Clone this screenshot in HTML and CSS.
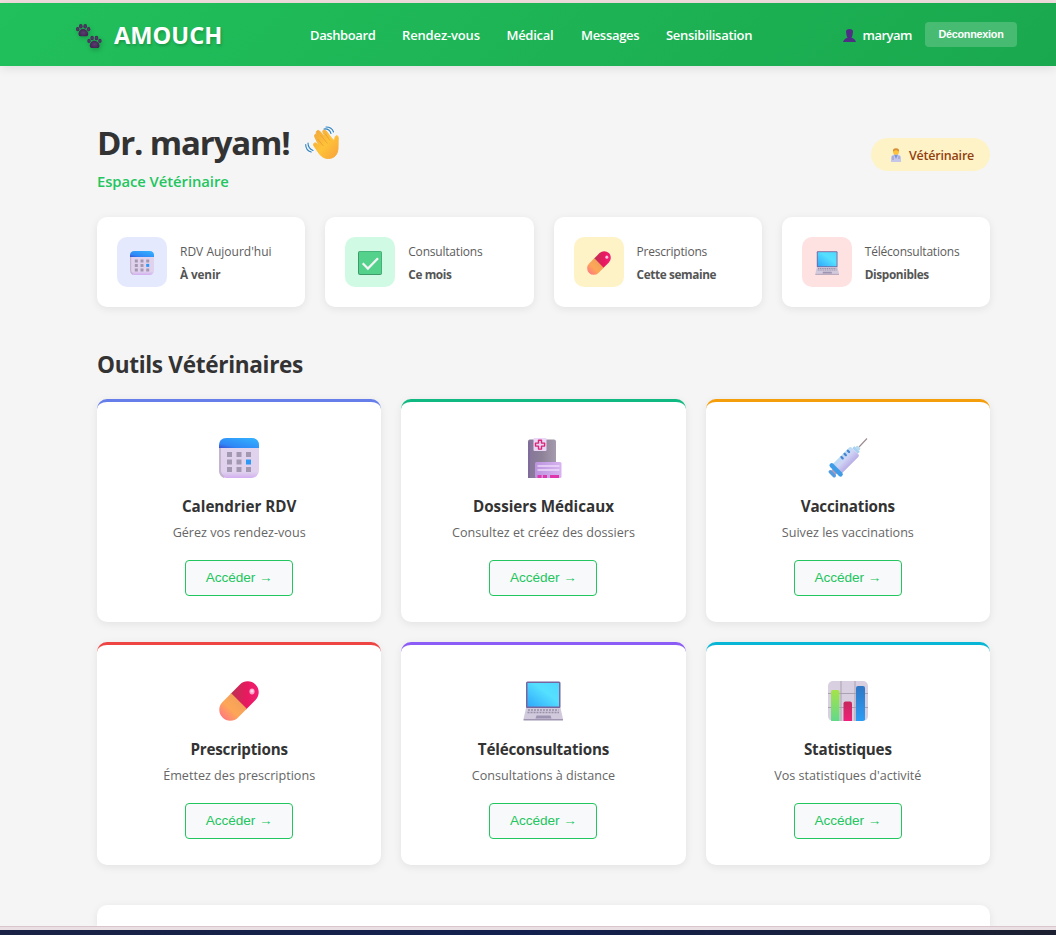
FILE: index.html
```html
<!DOCTYPE html>
<html lang="fr">
<head>
<meta charset="utf-8">
<title>Amouch</title>
<link rel="stylesheet" href="styles.css">
</head>
<body>
<svg class="defs" width="0" height="0" aria-hidden="true">
  <defs>
    <linearGradient id="calTop" x1="0" x2="1" y1="1" y2="0"><stop offset="0" stop-color="#3b4fd0"/><stop offset=".25" stop-color="#2f86f6"/><stop offset="1" stop-color="#33b5ff"/></linearGradient>
    <linearGradient id="calBody" x1="0" x2="0" y1="0" y2="1"><stop offset="0" stop-color="#e0d3ec"/><stop offset=".85" stop-color="#e0d2ee"/><stop offset="1" stop-color="#d3aef0"/></linearGradient>
    <linearGradient id="pillA" x1="0" x2="1" y1="0" y2="1"><stop offset="0" stop-color="#b83450"/><stop offset=".5" stop-color="#e8195f"/><stop offset="1" stop-color="#f5207c"/></linearGradient>
    <linearGradient id="pillB" x1="1" x2="0" y1="0" y2="0"><stop offset="0" stop-color="#f3a25a"/><stop offset=".5" stop-color="#fda657"/><stop offset="1" stop-color="#ff7b7d"/></linearGradient>
    <linearGradient id="screen" x1="0" x2="1" y1="1" y2="0"><stop offset="0" stop-color="#2fa8fb"/><stop offset=".6" stop-color="#55e0ff"/><stop offset="1" stop-color="#4fd8ff"/></linearGradient>
    <linearGradient id="book" x1="0" x2="1" y1="0" y2="0"><stop offset="0" stop-color="#85749a"/><stop offset=".5" stop-color="#8e8298"/><stop offset="1" stop-color="#a59bad"/></linearGradient>
    <linearGradient id="label" x1="0" x2="1" y1="0" y2="0"><stop offset="0" stop-color="#bb93df"/><stop offset="1" stop-color="#d8b4f0"/></linearGradient>
    <linearGradient id="barrel" x1="0" x2="0" y1="0" y2="1"><stop offset="0" stop-color="#b4dcf5"/><stop offset=".4" stop-color="#d0d4f5"/><stop offset="1" stop-color="#b8aee6"/></linearGradient>
    <linearGradient id="barG" x1="0" x2="0" y1="0" y2="1"><stop offset="0" stop-color="#a5e34a"/><stop offset="1" stop-color="#62d98a"/></linearGradient>
    <linearGradient id="barR" x1="0" x2="0" y1="0" y2="1"><stop offset="0" stop-color="#c5285c"/><stop offset="1" stop-color="#ef2079"/></linearGradient>
    <linearGradient id="barB" x1="0" x2="0" y1="0" y2="1"><stop offset="0" stop-color="#3077c4"/><stop offset="1" stop-color="#2c9cf5"/></linearGradient>
    <linearGradient id="hand" x1="0" x2="1" y1="0" y2="1"><stop offset="0" stop-color="#f0a53a"/><stop offset=".5" stop-color="#ffc338"/><stop offset="1" stop-color="#f7a13c"/></linearGradient>
    <radialGradient id="paw"><stop offset="0" stop-color="#5b3c70"/><stop offset="1" stop-color="#412653"/></radialGradient>
    <symbol id="i-calendar" viewBox="0 0 40 40">
      <rect width="40" height="40" rx="7.500" fill="url(#calBody)"/>
      <path d="M1 10v22q0 5 4 7" fill="none" stroke="#c4b5cf" stroke-width="2"/>
      <path d="M0 10V7.500Q0 0 7.500 0h25Q40 0 40 7.500V10z" fill="url(#calTop)"/>
      <path d="M8 14h5v5H8zm9.500 0h5v5h-5zm9.500 0h5v5h-5zM8 21.500h5v5H8zm9.500 0h5v5h-5zM8 29h5v5H8zm9.500 0h5v5h-5zm9.500 0h5v5h-5z" fill="#a398b1"/>
      <path d="M27 21.500h5v5h-5z" fill="#2d98f5"/>
    </symbol>
    <symbol id="i-pill" viewBox="0 0 40 40">
      <g transform="rotate(-45 20 20)">
        <path d="M19 9h13.300a11 11 0 0 1 0 22H19z" fill="url(#pillA)"/>
        <path d="M20 9H7.700a11 11 0 0 0 0 22H20z" fill="url(#pillB)"/>
      </g>
      <ellipse cx="33" cy="10.500" rx="2.600" ry="3" fill="#ff9ec6"/><circle cx="33" cy="10" r="1.600" fill="#ffd6ea"/>
    </symbol>
    <symbol id="i-laptop" viewBox="0 0 40 40">
      <rect x="3" y=".5" width="34.500" height="27" rx="1.500" fill="#77659f"/>
      <rect x="4.500" y="2" width="31.500" height="23.500" fill="url(#screen)"/>
      <path d="M3 27h34.500L40 38H.5z" fill="#d1c9dc"/>
      <path d="M5 29h30.500M4.500 31.500h31.500" stroke="#9990a6" stroke-width="1.700" stroke-dasharray="2 1"/>
      <path d="M13.500 34.500h14l1 3h-16z" fill="#9e94b1"/>
      <path d="M.5 38H40v1.500H.5z" fill="#a096b2"/>
    </symbol>
    <symbol id="i-check" viewBox="0 0 24 24">
      <rect width="24" height="24" rx="2" fill="#3d9a69"/>
      <rect x="1" y=".6" width="22.400" height="22.400" rx="1.200" fill="#54d28c"/>
      <path d="M4.700 12.300l5.200 5.200L20 7.300" fill="none" stroke="#f3f4f6" stroke-width="2.300"/>
    </symbol>
    <symbol id="i-record" viewBox="0 0 40 40">
      <path d="M5 3.500Q5 1.500 7 1.500h24q2 0 2 2V40H5z" fill="url(#book)"/>
      <path d="M6 4v36" stroke="#7e689d" stroke-width="1.500"/>
      <rect x="10.500" y="0" width="13" height="13" rx="1" fill="#ead6f7"/>
      <path d="M15.500 2.200h3v2.900h3.100v3h-3.100v3h-3v-3h-3v-3h3z" fill="#ead6f7" stroke="#dc2573" stroke-width="1.400" stroke-linejoin="round"/>
      <rect x="12" y="24" width="26.500" height="16" rx="1.500" fill="url(#label)"/>
      <path d="M14.500 28h22M14.500 32h22" stroke="#edd9fa" stroke-width="1.700"/>
      <path d="M14.500 38.500h4m1.500 0h4m3 0h9" stroke="#df37ae" stroke-width="3"/>
    </symbol>
    <symbol id="i-syringe" viewBox="0 0 40 40">
      <path d="M31 9l8-8.500" stroke="#9b8990" stroke-width="1.100"/>
      <g transform="rotate(-45 20 20)">
        <rect x="-2" y="17" width="6" height="6" fill="#bd9db7"/>
        <rect x="-4" y="15.500" width="3.500" height="9" rx="1.700" fill="#569ce0"/>
        <rect x="3" y="13.500" width="27" height="13" rx="2" fill="url(#barrel)"/>
        <rect x="30" y="16" width="3" height="8" rx="1" fill="#a8d2f0"/>
        <rect x="32.500" y="17.500" width="3" height="5" rx="1" fill="#b9d9f0"/>
        <rect x="1" y="11.500" width="4.500" height="17" rx="2.200" fill="#3e9de6"/>
        <path d="M16 14.700v1.800m4.500-1.800v1.800m4.500-1.800v1.800" stroke="#4584cf" stroke-width="2.200" stroke-linecap="round"/>
      </g>
    </symbol>
    <symbol id="i-chart" viewBox="0 0 40 40">
      <rect width="40" height="40" rx="5" fill="#d8cfe0"/>
      <path d="M13 0v40M27 0v40M0 12.500h40M0 26.500h40" stroke="#aaa1b1" stroke-width="1"/>
      <path d="M3 39.500V11q0-2 2-2h4.500q2 0 2 2v29H5q-2 0-2-.5z" fill="url(#barG)"/>
      <path d="M15.500 40V22.500q0-2 2-2h4.500q2 0 2 2V40z" fill="url(#barR)"/>
      <path d="M28 40V7q0-2 2-2h5q2 0 2 2v32l-2 1z" fill="url(#barB)"/>
    </symbol>
    <symbol id="i-paws" viewBox="0 0 26 26">
      <g id="onepaw" fill="url(#paw)"><path d="M2.500 10c0-3 2.500-4.900 4.500-4.900S12 7 12.200 10c.1 2.200-1.500 2.300-2.500 2.300H5c-1.500 0-2.500-.6-2.500-2.300z"/><ellipse cx="1.700" cy="5.200" rx="1.700" ry="2.100"/><ellipse cx="4.800" cy="2.300" rx="1.800" ry="2.200"/><ellipse cx="9.200" cy="2.300" rx="1.800" ry="2.200"/><ellipse cx="12.600" cy="5.200" rx="1.700" ry="2.100"/></g>
      <use href="#onepaw" transform="translate(11.300 11.700)"/>
    </symbol>
    <symbol id="i-user" viewBox="0 0 13 13">
      <path d="M3 2.500Q3 0 6.500 0T10 2.500l-.5 3.800Q9 8.500 8.300 8.800q3.700.7 4.700 4.200H0q1-3.500 4.700-4.200Q4 8.500 3.500 6.300z" fill="#4f2f84"/>
    </symbol>
    <symbol id="i-wave" viewBox="0 0 34 34">
      <path d="M10 11.500c-1.500-3 1-4.500 2.800-2.500L16 13 11.500 7.500c-1-2.500 1.500-4 3-2.500l6.500 7-3-5.500c-1-2.500 1.500-3.500 3-1.700L26.500 12l3 3L30 11.500c.4-2.500 3-2.300 3.200 0L33 22c0 6.500-4 10.500-9.500 10.500-4 0-6.500-1.500-9-4.500l-5.500-8c-1.500-2.500 1-4.200 3-2.200l2 2z" fill="url(#hand)" stroke="url(#hand)" stroke-linejoin="round" stroke-width="1"/>
      <path d="M12.500 13l6 7m-3-11 7 8.500M20 7.500l5 7" fill="none" stroke="#e8963a" stroke-width=".7"/>
      <path d="M19 3c4-.5 6 1.500 7 4.500M21 1c4 0 6.500 2 7.500 5M3 17c0 4 1.500 6 5 7.500M.7 18.500c0 4 2 6.500 5.500 7.500" fill="none" stroke="#2e83c4" stroke-width="1.100" stroke-linecap="round"/>
    </symbol>
    <symbol id="i-vet" viewBox="0 0 12 14">
      <path d="M1 14V10q0-3 3-3.500h4q3 .5 3 3.500v4z" fill="#c4c6ea"/>
      <path d="M4 6.500L6 11l2-4.500z" fill="#7798d9"/><path d="M3 8v4m6-4v3" stroke="#8a8cc2" stroke-width=".8"/>
      <circle cx="6" cy="3.700" r="3" fill="#ffc23b"/><path d="M3 3.500Q2.600.2 6 .2T9 3.500L6 2z" fill="#d98f38"/>
    </symbol>
  </defs>
</svg>
<div class="window-edge"></div>
<header class="header">
  <div class="brand"><svg class="brand-icon"><use href="#i-paws"/></svg><span class="brand-name">AMOUCH</span></div>
  <nav class="nav"><a>Dashboard</a><a class="wide">Rendez-vous</a><a>Médical</a><a>Messages</a><a>Sensibilisation</a></nav>
  <div class="account"><svg class="user-icon"><use href="#i-user"/></svg><span class="user-name">maryam</span><button class="logout">Déconnexion</button></div>
</header>
<main class="page">
  <section class="welcome">
    <div>
      <h1 class="title"><span>Dr. maryam!</span><svg class="wave"><use href="#i-wave"/></svg></h1>
      <p class="subtitle">Espace Vétérinaire</p>
    </div>
    <div class="role"><svg class="vet"><use href="#i-vet"/></svg><span>Vétérinaire</span></div>
  </section>
  <section class="stats">
    <article class="stat"><div class="stat-icon indigo"><svg><use href="#i-calendar"/></svg></div><div class="stat-text"><p>RDV Aujourd'hui</p><strong>À venir</strong></div></article>
    <article class="stat"><div class="stat-icon mint"><svg><use href="#i-check"/></svg></div><div class="stat-text"><p>Consultations</p><strong>Ce mois</strong></div></article>
    <article class="stat"><div class="stat-icon yellow"><svg><use href="#i-pill"/></svg></div><div class="stat-text"><p>Prescriptions</p><strong>Cette semaine</strong></div></article>
    <article class="stat"><div class="stat-icon rose"><svg><use href="#i-laptop"/></svg></div><div class="stat-text"><p>Téléconsultations</p><strong>Disponibles</strong></div></article>
  </section>
  <h2 class="section-title">Outils Vétérinaires</h2>
  <section class="tools">
    <article class="tool blue"><svg class="tool-icon"><use href="#i-calendar"/></svg><h3 class="wide">Calendrier RDV</h3><p>Gérez vos rendez-vous</p><button class="open">Accéder →</button></article>
    <article class="tool green"><svg class="tool-icon"><use href="#i-record"/></svg><h3 class="wide">Dossiers Médicaux</h3><p>Consultez et créez des dossiers</p><button class="open">Accéder →</button></article>
    <article class="tool amber"><svg class="tool-icon"><use href="#i-syringe"/></svg><h3>Vaccinations</h3><p>Suivez les vaccinations</p><button class="open">Accéder →</button></article>
    <article class="tool red"><svg class="tool-icon"><use href="#i-pill"/></svg><h3>Prescriptions</h3><p>Émettez des prescriptions</p><button class="open">Accéder →</button></article>
    <article class="tool violet"><svg class="tool-icon"><use href="#i-laptop"/></svg><h3>Téléconsultations</h3><p>Consultations à distance</p><button class="open">Accéder →</button></article>
    <article class="tool cyan"><svg class="tool-icon"><use href="#i-chart"/></svg><h3>Statistiques</h3><p>Vos statistiques d'activité</p><button class="open">Accéder →</button></article>
  </section>
  <section class="next-panel"></section>
</main>
<div class="frame-edge"></div>
<div class="taskbar"></div>
</body>
</html>
```
FILE: styles.css
```css
* { box-sizing: border-box; margin: 0; padding: 0; }
body { width: 1056px; height: 935px; overflow: hidden; display: flex; flex-direction: column; background: #f5f5f5; font-family: "Open Sans", "Noto Sans", sans-serif; color: #333; }
svg { display: block; overflow: visible; flex: none; }
symbol { overflow: visible; }
.defs { position: absolute; }
.window-edge { height: 3px; flex: none; background: #f0dfde; }
.header { height: 63px; flex: none; display: flex; align-items: center; padding: 0 39px 0 76px; background: linear-gradient(135deg, #21c05c, #1aa84e); box-shadow: 0 2px 10px rgba(0,0,0,.1); position: relative; color: #fff; }
.brand { display: flex; align-items: center; gap: 12px; width: 234px; }
.brand-icon { width: 26px; height: 26px; margin-top: 5px; filter: drop-shadow(1px 2px 2px rgba(0,0,0,.2)); }
.brand-name { font-size: 23.600px; font-weight: 700; letter-spacing: 0; text-shadow: 1px 2px 3px rgba(0,0,0,.2); line-height: 30px; }
.nav { display: grid; grid-template-columns: 92px 104.500px 74.500px 85px auto; font-size: 13px; font-weight: 600; line-height: 20px; letter-spacing: -.3px; }
.nav a:first-child { letter-spacing: -.4px; }
.nav .wide { letter-spacing: -.15px; }
.account { margin-left: auto; display: flex; align-items: center; }
.user-icon { width: 13px; height: 13px; margin-right: 6.500px; margin-top: 1px; }
.user-name { font-size: 13px; font-weight: 600; line-height: 20px; margin-right: 13px; letter-spacing: -.5px; }
.logout { width: 92px; height: 25px; border: 0; border-radius: 4px; background: rgba(255,255,255,.2); color: #fff; font: 700 10.800px "Liberation Sans", Arial, sans-serif; letter-spacing: -.25px; padding-bottom: 1px; }
.page { width: 893px; margin-left: 97px; padding-top: 57px; flex: 1; min-height: 0; }
.welcome { display: flex; justify-content: space-between; height: 94px; }
.title { display: flex; align-items: center; font-size: 33px; line-height: 40px; height: 40px; font-weight: 700; gap: 15px; letter-spacing: -1.150px; }
.wave { width: 34px; height: 34px; margin-top: -1px; }
.subtitle { color: #22c55e; font-size: 14.800px; font-weight: 600; line-height: 20px; letter-spacing: -.05px; margin-top: 8px; }
.role { margin-top: 15px; width: 119px; height: 33px; border-radius: 17px; background: #fef3c7; color: #92400e; display: flex; align-items: center; padding-left: 19px; gap: 7px; font-size: 12.500px; font-weight: 600; letter-spacing: -.2px; }
.role span { padding-top: 1px; }
.vet { width: 12px; height: 14px; }
.stats { display: grid; grid-template-columns: repeat(4, 1fr); gap: 20px; }
.stat { height: 90px; border-radius: 10px; background: #fff; padding: 20px; display: flex; gap: 13px; box-shadow: 0 2px 8px rgba(0,0,0,.08); }
.stat-icon { width: 50px; height: 50px; border-radius: 10px; display: flex; align-items: center; justify-content: center; padding-top: 2px; flex: none; }
.stat-icon svg { width: 24px; height: 24px; }
.indigo { background: #e5e9fe; } .mint { background: #d1fae5; } .yellow { background: #fef3c7; } .rose { background: #fee2e2; }
.stat-text { color: #5c5c5c; font-size: 12px; white-space: nowrap; padding-top: 3px; letter-spacing: -.2px; }
.stat-text p { line-height: 23px; }
.stat:first-child p { letter-spacing: 0; }
.stat-text strong { display: block; line-height: 23px; color: #555; font-weight: 700; font-size: 11.800px; letter-spacing: -.38px; }
.stat:first-child strong { letter-spacing: -.15px; }
.section-title { font-size: 22.600px; line-height: 32px; font-weight: 700; letter-spacing: -.32px; margin: 42px 0 18px; }
.tools { display: grid; grid-template-columns: repeat(3, 1fr); gap: 20px; }
.tool { height: 223px; border-radius: 10px; background: #fff; border-top: 3px solid; box-shadow: 0 2px 8px rgba(0,0,0,.08); display: flex; flex-direction: column; align-items: center; padding-top: 36px; }
.blue { border-top-color: #667eea; } .green { border-top-color: #10b981; } .amber { border-top-color: #f59e0b; } .red { border-top-color: #ef4444; } .violet { border-top-color: #8b5cf6; } .cyan { border-top-color: #06b6d4; }
.tool-icon { width: 40px; height: 40px; }
.tool h3 { color: #333; font-size: 15.200px; line-height: 24px; margin-top: 16px; letter-spacing: -.2px; }
.tool h3.wide { letter-spacing: 0; }
.tool p { color: #666; font-size: 12.600px; line-height: 20px; margin-top: 5px; }
.open { width: 108px; height: 36px; margin-top: 17px; border: 1px solid #22c55e; border-radius: 4px; background: #f8f9fa; color: #22c55e; font: 13.600px "Liberation Sans", Arial, sans-serif; letter-spacing: -.05px; padding-bottom: 2px; }
.next-panel { height: 21px; margin-top: 40px; border-radius: 10px 10px 0 0; background: #fff; box-shadow: 0 2px 8px rgba(0,0,0,.08); }
.frame-edge { height: 4px; flex: none; background: #eadfe3; border-top: 1px solid #d9c5cd; position: relative; }
.taskbar { height: 5px; flex: none; background: linear-gradient(90deg, #1a2345, #13204f 50%, #1c2030); position: relative; }
```
